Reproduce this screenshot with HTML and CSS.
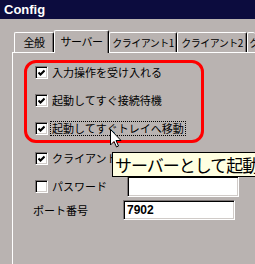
FILE: index.html
```html
<!DOCTYPE html>
<html lang="ja">
<head>
    <meta charset="UTF-8">
    <title>Config</title>
    <link rel="stylesheet" href="styles.css">
</head>
<body>
    <div class="titlebar">Config</div>

    <div class="tabs">
        <div class="tab w-general">全般</div>
        <div class="tab active w-server">サーバー</div>
        <div class="tab w-client">クライアント1</div>
        <div class="tab w-client2">クライアント2</div>
        <div class="tab w-last">ク</div>
    </div>

    <div class="panel">
        <div class="highlight">
            <div class="check">
                <span class="box checked"><svg viewBox="0 0 7 7" width="7" height="7"><polyline points="0.5,3.5 2.5,5.5 6.5,1.5" fill="none" stroke="#000" stroke-width="2"/></svg></span>
                <span class="label">入力操作を受け入れる</span>
            </div>
            <div class="check">
                <span class="box checked"><svg viewBox="0 0 7 7" width="7" height="7"><polyline points="0.5,3.5 2.5,5.5 6.5,1.5" fill="none" stroke="#000" stroke-width="2"/></svg></span>
                <span class="label">起動してすぐ接続待機</span>
            </div>
            <div class="check">
                <span class="box checked"><svg viewBox="0 0 7 7" width="7" height="7"><polyline points="0.5,3.5 2.5,5.5 6.5,1.5" fill="none" stroke="#000" stroke-width="2"/></svg></span>
                <span class="label focus">起動してすぐトレイへ移動</span>
            </div>
        </div>

        <div class="check row-client">
            <span class="box checked"><svg viewBox="0 0 7 7" width="7" height="7"><polyline points="0.5,3.5 2.5,5.5 6.5,1.5" fill="none" stroke="#000" stroke-width="2"/></svg></span>
            <span class="label">クライアント接続を許可</span>
        </div>

        <div class="field row-password">
            <span class="box"></span>
            <span class="label pw-label">パスワード</span>
            <div class="input"></div>
        </div>

        <div class="field row-port">
            <span class="label port-label">ポート番号</span>
            <div class="input">7902</div>
        </div>
    </div>

    <div class="tooltip">サーバーとして起動</div>

    <svg class="cursor" width="12" height="19" viewBox="0 0 12 19">
        <path d="M0.5 0.5 L0.5 16 L4 12.5 L6.5 18 L8.5 17 L6 11.5 L11 11.5 Z" fill="#fff" stroke="#000" stroke-width="1"/>
    </svg>
</body>
</html>
```

FILE: styles.css
```css
body {
    margin: 0;
    width: 255px;
    height: 264px;
    overflow: hidden;
    position: relative;
    background-color: #b9b3b1;
    font-family: "Noto Sans CJK JP", sans-serif;
    font-size: 11px;
    color: #000;
}

.titlebar {
    height: 19px;
    padding-left: 4px;
    background-color: #0c0c3e;
    color: #fff;
    font: bold 13px "Liberation Sans", sans-serif;
    line-height: 19px;
}

.tabs {
    display: flex;
    align-items: flex-end;
    height: 33px;
    padding-left: 14px;
}

.tab {
    flex-shrink: 0;
    height: 20px;
    box-sizing: border-box;
    display: flex;
    align-items: center;
    justify-content: center;
    overflow: hidden;
    border-top: 1px solid #fff;
    border-left: 1px solid #fff;
    border-right: 1px solid #000;
    border-radius: 2px 2px 0 0;
    box-shadow: inset -1px 0 #7b7575;
    font-size: 10px;
    letter-spacing: -0.5px;
    line-height: 13px;
    white-space: nowrap;
}

.tab.active {
    height: 23px;
    margin-bottom: -1px;
    position: relative;
    z-index: 1;
    background-color: #b9b3b1;
    padding-bottom: 2px;
    font-size: 11px;
}

.w-general { width: 40px; font-size: 11px; }
.w-server { width: 55px; }
.w-client { width: 68px; }
.w-client2 { width: 70px; }
.w-last { width: 8px; justify-content: flex-start; padding-left: 1px; border-right: 0; box-shadow: none; }

.panel {
    margin-left: 12px;
    height: 204px;
    padding-top: 7px;
    border-top: 1px solid #fff;
    border-left: 1px solid #fff;
}

.highlight {
    margin-left: 11px;
    width: 180px;
    height: 83px;
    box-sizing: border-box;
    padding: 3px 0 0 8px;
    border: 3px solid #f00;
    border-radius: 12px;
    display: flex;
    flex-direction: column;
    gap: 15px;
}

.check {
    display: flex;
    align-items: center;
    gap: 4px;
    height: 13px;
    line-height: 13px;
}

.box {
    width: 13px;
    height: 13px;
    flex-shrink: 0;
    box-sizing: border-box;
    display: flex;
    align-items: center;
    justify-content: center;
    background-color: #fff;
    border: 1px solid;
    border-color: #7b7575 #fff #fff #7b7575;
    box-shadow: inset 1px 1px #000, inset -1px -1px #d0cbc8;
}

.label {
    white-space: nowrap;
}

.focus {
    margin-left: -1px;
    padding: 0 1px;
    outline: 1px dotted #000;
}

.row-client {
    margin: 9px 0 0 22px;
}

.field {
    display: flex;
    align-items: center;
    height: 21px;
    line-height: 13px;
}

.row-password {
    margin: 11px 0 0 22px;
    gap: 4px;
}

.pw-label {
    width: 71px;
}

.row-port {
    margin: 3px 0 0 20px;
    height: 20px;
}

.port-label {
    width: 90px;
}

.input {
    width: 112px;
    height: 100%;
    box-sizing: border-box;
    padding: 0 3px;
    display: flex;
    align-items: center;
    background-color: #fff;
    border: 1px solid;
    border-color: #7b7575 #fff #fff #7b7575;
    box-shadow: inset 1px 1px #000, inset -1px -1px #d0cbc8;
    font: bold 12px "Liberation Sans", sans-serif;
}

.tooltip {
    position: absolute;
    left: 112px;
    top: 152px;
    width: 143px;
    height: 25px;
    box-sizing: border-box;
    padding-left: 2px;
    overflow: hidden;
    background-color: #ffffe1;
    border: 1px solid #000;
    border-right: 0;
    font-size: 17px;
    letter-spacing: -1px;
    line-height: 23px;
    white-space: nowrap;
}

.cursor {
    position: absolute;
    left: 110px;
    top: 129px;
}
```
